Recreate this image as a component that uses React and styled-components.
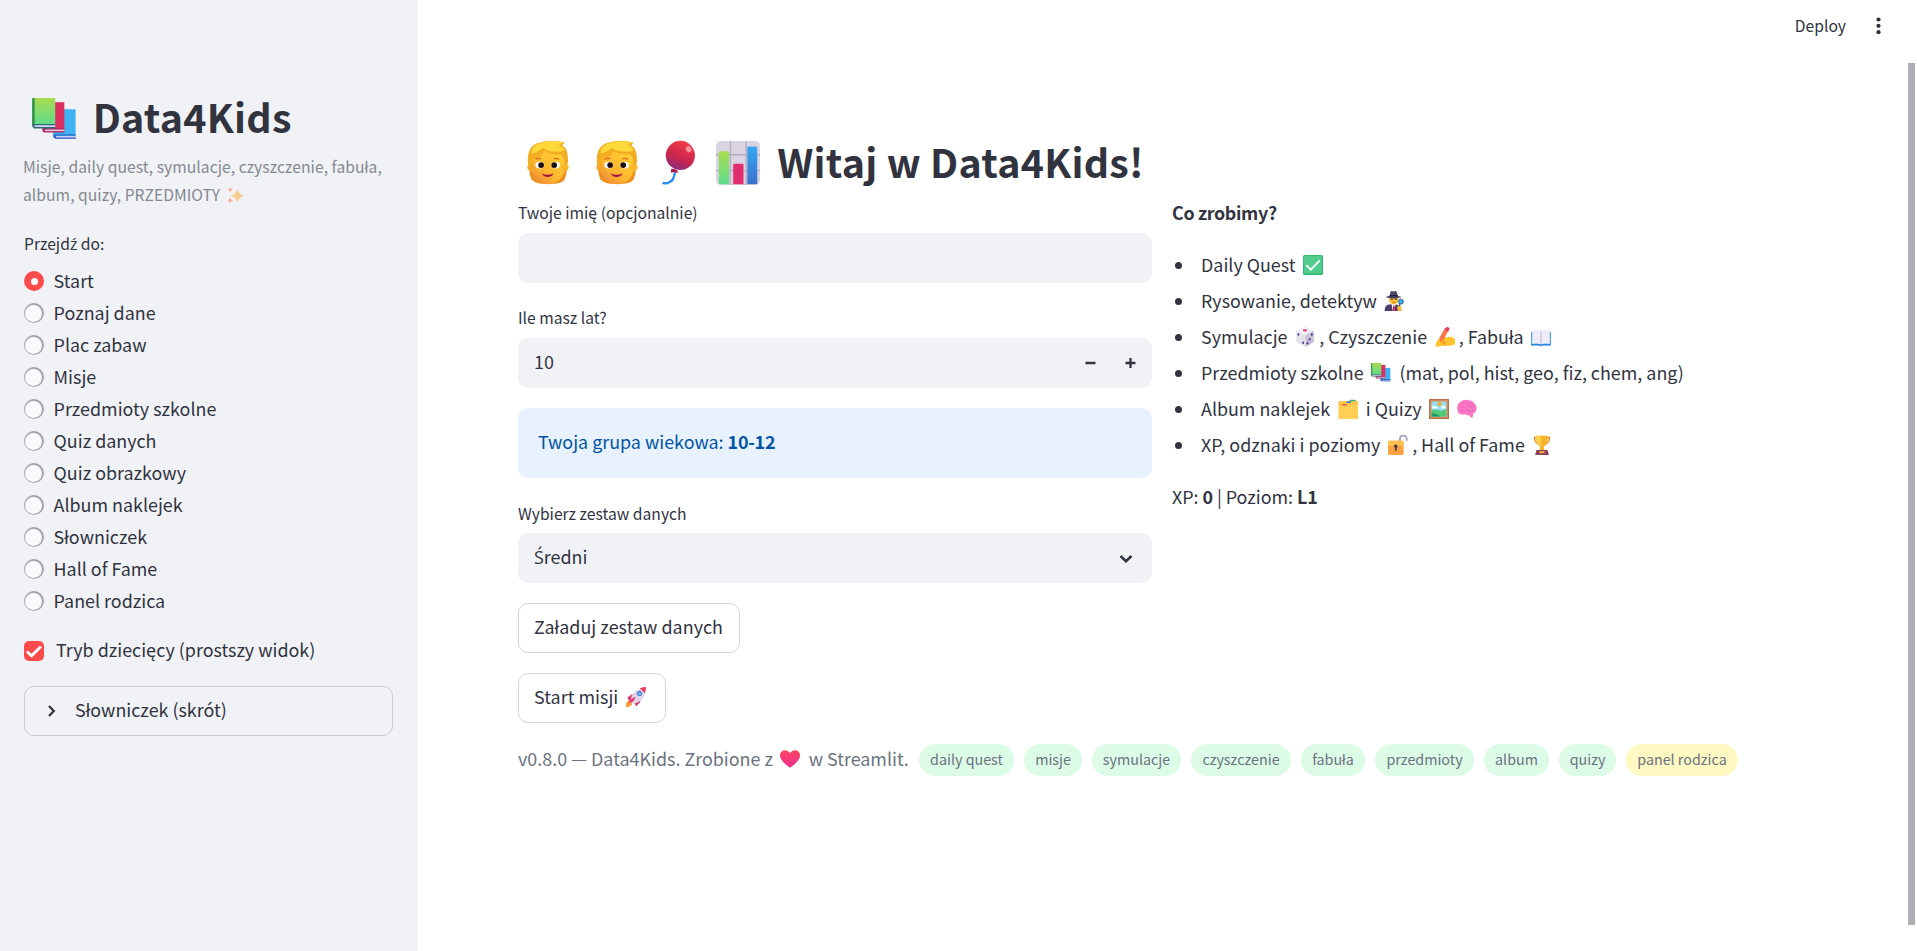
import React from "react";
import styled, { createGlobalStyle, css } from "styled-components";

const GlobalStyle = createGlobalStyle`
  * { box-sizing: border-box; }
  body {
    margin: 0;
    background: #ffffff;
    color: #31333f;
    font-family: "Noto Sans CJK SC", "Noto Sans", sans-serif;
    font-size: 17.9px;
    overflow: hidden;
  }
  b { letter-spacing: -0.25px; }
`;

/* ---------- layout ---------- */
const Page = styled.div`
  display: flex;
  height: 951px;
`;
const Sidebar = styled.aside`
  flex: 0 0 418px;
  padding: 89px 24px 0;
  background: #f0f2f6;
`;
const Content = styled.div`
  flex: 1;
  min-width: 0;
  display: flex;
  flex-direction: column;
`;
const Header = styled.header`
  display: flex;
  justify-content: flex-end;
  align-items: center;
  gap: 30px;
  height: 63px;
  padding: 0 36px 12px 0;
  font-size: 15.66px;
  line-height: 26px;
`;
const Scroller = styled.div`
  flex: 1;
  display: flex;
  justify-content: space-between;
`;
const Main = styled.main`
  width: 1230px;
  margin-left: 100px;
  padding-top: 71px;
`;
const ScrollThumb = styled.div`
  width: 7px;
  height: 862px;
  margin-right: 2px;
  background: #aeaeb4;
`;
const Columns = styled.div`
  display: grid;
  grid-template-columns: 634px 1fr;
  column-gap: 20px;
  margin-top: 13px;
`;
const FormColumn = styled.div`
  display: flex;
  flex-direction: column;
  align-items: flex-start;
`;

/* ---------- text ---------- */
const Title = styled.h1`
  margin: 0;
  height: 53px;
  font-size: 39.4px;
  font-weight: 700;
  letter-spacing: 0.25px;
  line-height: 53px;
  white-space: nowrap;
`;
const Caption = styled.p`
  margin: 11px 0 22px -1px;
  font-size: 15.66px;
  letter-spacing: 0.04px;
  line-height: 28px;
  color: #868891;
  white-space: nowrap;
`;
const Label = styled.div`
  height: 26px;
  margin-bottom: ${(p) => p.$gap}px;
  font-size: 15.66px;
  line-height: 26px;
  white-space: nowrap;
`;
const Acute = styled.span`
  font-family: "Open Sans", "Noto Sans", sans-serif;
  line-height: 1;
`;

/* ---------- sidebar widgets ---------- */
const RadioRow = styled.label`
  display: flex;
  align-items: center;
  gap: 9.6px;
  height: 32px;
`;
const RadioDot = styled.span`
  display: flex;
  align-items: center;
  justify-content: center;
  width: 20px;
  height: 20px;
  border-radius: 50%;
  background: ${(p) => (p.$on ? "#ff4b4b" : "#a3a4ac")};
  &::after {
    content: "";
    width: ${(p) => (p.$on ? 7 : 17)}px;
    height: ${(p) => (p.$on ? 7 : 17)}px;
    margin: ${(p) => (p.$on ? "0" : "1px 1px 0 0")};
    border-radius: 50%;
    background: ${(p) => (p.$on ? "#ffffff" : "#f9f9fb")};
  }
`;
const OptionText = styled.span`
  padding-bottom: ${(p) => p.$lift || 3}px;
  line-height: 28px;
  white-space: nowrap;
`;
const CheckRow = styled.label`
  display: flex;
  align-items: center;
  gap: 12px;
  height: 32px;
  margin-top: 18px;
`;
const CheckBox = styled.span`
  display: flex;
  width: 20px;
  height: 20px;
  border-radius: 5px;
  background: #ff4b4b;
`;
const Expander = styled.div`
  display: flex;
  align-items: center;
  gap: 18px;
  width: 369px;
  height: 50px;
  margin-top: 19px;
  padding-left: 22px;
  border: 1px solid #c9cbd1;
  border-radius: 10px;
`;

/* ---------- form widgets ---------- */
const Field = styled.div`
  display: flex;
  align-items: center;
  justify-content: space-between;
  width: 634px;
  height: 50px;
  margin-bottom: ${(p) => p.$gap}px;
  padding: 0 16px 4px;
  border-radius: 10px;
  background: #f0f2f6;
`;
const FieldIcons = styled.div`
  display: flex;
  gap: 29px;
  padding-top: 3px;
`;
const Info = styled.div`
  display: flex;
  align-items: center;
  width: 634px;
  height: 70px;
  margin-bottom: 23px;
  padding: 0 20px 5px;
  border-radius: 10px;
  background: #e8f2ff;
  color: #0054a3;
  white-space: pre;
`;
const Button = styled.button`
  height: 50px;
  width: ${(p) => p.$width}px;
  margin: 0 0 20px;
  padding: 0 0 4px 15px;
  border: 1px solid #d6d6d9;
  border-radius: 10px;
  background: #ffffff;
  color: inherit;
  font: inherit;
  letter-spacing: 0.03px;
  line-height: 30px;
  text-align: left;
  white-space: nowrap;
`;

/* ---------- right column ---------- */
const Paragraph = styled.p`
  margin: ${(p) => p.$top || 0}px 0 0;
  height: 30px;
  line-height: 30px;
  white-space: nowrap;
`;
const Heading = styled.p`
  margin: 0;
  height: 24px;
  line-height: 24px;
  font-weight: 700;
  letter-spacing: -0.35px;
`;
const List = styled.ul`
  margin: 23px 0 0;
  padding: 0;
  list-style: none;
`;
const Item = styled.li`
  display: flex;
  align-items: center;
  height: 36px;
  padding-bottom: 2px;
  line-height: 34px;
  white-space: nowrap;
  &::before {
    content: "";
    flex: 0 0 7px;
    height: 7px;
    margin: 3px 19px 0 3px;
    border-radius: 50%;
    background: #31333f;
  }
`;

/* ---------- footer ---------- */
const Footer = styled.footer`
  display: flex;
  align-items: center;
  height: 32px;
  margin-top: 1px;
  color: #6b7280;
  white-space: nowrap;
`;
const FooterText = styled.span`
  width: 401px;
  padding-bottom: 5px;
  line-height: 28px;
`;
const Badge = styled.span`
  width: ${(p) => p.$width}px;
  height: 32px;
  margin-right: 10px;
  border-radius: 16px;
  background: ${(p) => (p.$warm ? "#fef9c3" : "#dcfce7")};
  font-size: 14.3px;
  line-height: 30px;
  text-align: center;
`;

/* ---------- emoji ---------- */
const EmojiSvg = styled.svg`
  display: inline-block;
  width: ${(p) => p.$size}px;
  height: ${(p) => p.$size}px;
  margin: 0 ${(p) => p.$right}px 0 ${(p) => p.$left}px;
  vertical-align: ${(p) => p.$drop}px;
  overflow: visible;
  ${(p) =>
    p.$faded &&
    css`
      opacity: 0.6;
    `}
`;

const drawings = {
  books: (
    <>
      <path d="M15 8h16v21H17l-2-2z" fill="#3fb2f3" />
      <path d="M16 27h15v2H16z" fill="#d4cdf2" />
      <path d="M15 27q0-1.300 2-1.300h14v.9H17.500q-1 .8 0 1.500H31v.9H17q-2-.5-2-2z" fill="#2c63c5" />
      <path d="M7.500 3H23v21H7.500z" fill="#dd2f60" />
      <path d="M8 22h15v2H8z" fill="#e3c6e6" />
      <path d="M7.500 21.500h15.500v.9H9.500q-1 .7 0 1.300H23v.9H9q-1.500-.5-1.500-3z" fill="#b01c55" />
      <path d="M0 1q0-1 1-1h15.500v19H0z" fill="url(#barGreen)" />
      <path d="M0 1q0-1 1-1h1v19H0z" fill="#3b9a50" />
      <path d="M1 19h15.500v2H1z" fill="#dcd0f0" />
      <path d="M0 18.500h16.500v.9H2q-1 .7 0 1.300h14.500v.9H1.500Q0 21 0 18.500z" fill="#2c6b77" />
    </>
  ),
  face: (
    <>
      <path d="M4 14Q1 22 4 28q3 3 7 3h10q5 0 7-3 3-6 0-14z" fill="#ee8f1c" />
      <ellipse cx="16" cy="18.500" rx="12.500" ry="13" fill="url(#skinFill)" />
      <circle cx="3.500" cy="19" r="2.500" fill="#f5a62c" />
      <circle cx="28.500" cy="19" r="2.500" fill="#ffb52c" />
      <path d="M1.500 17Q0 3 10 1q8-2 18 0-1 2-2 2 5 2 4.500 13l-2 2q-1-6-3-8-9 0-12-3-2 5-8 6l-1 5z" fill="#f3ad22" />
      <path d="M9 2q9-3 18-1-2 2-5 2 5 0 6 4-10 2-16-2Q9 8 4 9q0-5 5-7z" fill="#ffd83a" />
      <ellipse cx="10" cy="17.500" rx="3.200" ry="2.500" fill="#fff" />
      <ellipse cx="21.500" cy="17.500" rx="3.200" ry="2.500" fill="#fff" />
      <circle cx="11" cy="17.500" r="2.100" fill="#1f0d10" />
      <circle cx="20.500" cy="17.500" r="2.100" fill="#1f0d10" />
      <path d="M7 13.500q2-1.500 4-.5M20 13q2-1 4 .5" stroke="#e0682a" strokeWidth="1" fill="none" />
      <path d="M11.500 23.700q4 1.700 8.500 0-1 2.500-4.200 2.500t-4.300-2.500z" fill="#a3154b" />
    </>
  ),
  balloon: (
    <>
      <path d="M13 21q0 8-5 9.500-3 .5-4 0" stroke="#2f8ef4" strokeWidth="1.800" fill="none" />
      <circle cx="17" cy="10.500" r="10.600" fill="url(#balloonFill)" />
      <path d="M10.500 20l4 1 1 2-3.500-.5-2 .5z" fill="#b01347" />
      <ellipse cx="23" cy="6" rx="2" ry="2.300" fill="#ff8f98" transform="rotate(-35 23 6)" />
    </>
  ),
  chart: (
    <>
      <rect width="32" height="32" rx="3.500" fill="#d9d3e2" />
      <path d="M10.500 0v32M22 0v32M0 10h32M0 21.500h32" stroke="#b5adc2" strokeWidth="1" />
      <path d="M2 8.500q0-1 1-1h5.500q1 0 1 1V31.500H2z" fill="url(#barGreen)" />
      <path d="M12.500 17.500q0-1 1-1H19q1 0 1 1v14h-7.500z" fill="#e22c6d" />
      <path d="M22.800 5q0-1 1-1h5.200q1 0 1 1v26.500h-7.200z" fill="url(#barBlue)" />
    </>
  ),
  sparkles: (
    <>
      <path d="M19 3q1.500 10 13 13-11.500 3-13 13-2-10-12-13 10-3 12-13z" fill="#fbb74b" />
      <path d="M6 0q.8 4 5 5-4.200 1-5 5Q5 6 1 5q4.200-1 5-5z" fill="#fb8d5c" />
      <path d="M6 19q.8 4.500 5 5.500-4.200 1-5 5.500-1-4.500-6-5.500 5-1 6-5.500z" fill="#fb8070" />
    </>
  ),
  check: (
    <>
      <rect width="32" height="32" rx="3" fill="#2fae6d" />
      <rect x="1" y="1" width="29.500" height="29" rx="2.500" fill="#50cd8c" />
      <path d="M6 17l6.500 6.500L26 9.500" stroke="#fff" strokeWidth="3" fill="none" strokeLinecap="round" />
    </>
  ),
  detective: (
    <>
      <path d="M1 32q0-8 5-10l6-1h6q9 1 10 11z" fill="#49416b" />
      <path d="M12 20h7l-3 12h-2z" fill="#fff" />
      <path d="M14.500 23h2.500l1 9h-4z" fill="#d32f63" />
      <circle cx="15.500" cy="14" r="7.500" fill="#ffc22f" />
      <path d="M9 8q1-8 3-8 3 1.500 6 0 3 0 4 8 5 .5 6 2-12 4-25 0 1-2 6-2z" fill="#4d4769" />
      <path d="M9 6.500h13v2H9z" fill="#27223f" />
      <path d="M11 13h3m3.500 0h3" stroke="#4b2a29" strokeWidth="1.800" />
      <path d="M13 18q2.500 1.500 5 0" stroke="#a63b2c" fill="none" />
      <circle cx="27" cy="17" r="4" fill="#36b2ef" stroke="#3a517f" strokeWidth="1.300" />
      <path d="M25 21v8" stroke="#484066" strokeWidth="2" />
      <path d="M21 25q3-2 6 0l1 7h-6z" fill="#ffb72c" />
    </>
  ),
  die: (
    <>
      <path d="M16 0l14 6v18l-13 8L2 24V6z" fill="#e4e0ec" />
      <path d="M16 0l14 6-13 7L2 6z" fill="#f2eff7" />
      <path d="M17 13l13-7v18l-13 8z" fill="#c8c0d5" />
      <ellipse cx="16" cy="5.500" rx="3.500" ry="1.800" fill="#e7436a" />
      <g fill="#4b3984">
        <ellipse cx="5.500" cy="12" rx="1.500" ry="2" />
        <ellipse cx="13" cy="25" rx="1.500" ry="2" />
        <ellipse cx="20" cy="26" rx="1.500" ry="2" />
        <ellipse cx="23.500" cy="19.500" rx="1.500" ry="2" />
        <ellipse cx="27" cy="12" rx="1.500" ry="2" />
      </g>
    </>
  ),
  writing: (
    <>
      <path d="M1 31q-1-5 3-10 4-6 9-7l5 3q8-3 12 1l2 2v8l-9 2H12l-5 1z" fill="#ffc42e" />
      <path d="M11 22l6 3h-6l6 4" stroke="#ed961f" strokeWidth="1.500" fill="none" />
      <path d="M7 17L16 2l6 3-9 16-5 3z" fill="#fb7445" />
      <path d="M17 1q2-2 4-.5 3 1 2 3.500l-2 3-6-3z" fill="#e8405d" />
    </>
  ),
  openBook: (
    <>
      <path d="M0 8h32v22H19l-3 1-3-1H0z" fill="#4aa9f0" />
      <path d="M2 5q7-2 14 1 7-3 14-1v22q-7-2-14 1-7-3-14-1z" fill="#efebf8" />
      <path d="M16 6v22" stroke="#c5bddb" strokeWidth="1.800" />
      <path d="M1 28h14q1 1 2 0h14" stroke="#347dd2" strokeWidth="1.400" fill="none" />
    </>
  ),
  folders: (
    <>
      <path d="M18 4q0-3 2-3h7q2 0 2 3z" fill="#35b77e" />
      <path d="M1 5q0-2 2-2h27q2 0 2 2v25q0 2-2 2H3q-2 0-2-2z" fill="#ffc548" />
      <path d="M13 5.500l2-2h6v3h-8z" fill="#3c83cf" />
      <path d="M7 8h7v2.500H7z" fill="#ef5b4c" />
      <path d="M1 12h14l3-2h14v20q0 2-2 2H3q-2 0-2-2z" fill="#ffcf56" />
    </>
  ),
  picture: (
    <>
      <rect width="32" height="32" rx="1" fill="#b96f49" />
      <path d="M2 2h28v28H2z" fill="#d9935f" />
      <path d="M4 4h24v24H4z" fill="#92dcf5" />
      <circle cx="17" cy="8" r="3.300" fill="#fba91f" />
      <path d="M5 12q3-3 6 0h3v3H5zM20 11q3-2 7 1v3h-8z" fill="#effbff" />
      <path d="M4 18q8-3 15 1l9-3v12H4z" fill="#55c77a" />
      <path d="M4 23q8-1 14 5H4z" fill="#219b65" />
    </>
  ),
  brain: (
    <>
      <path d="M1 19Q-2 9 6 4q5-4 13-2 6 0 9 5 5 5 3 11-1 4-5 5l-1 6q-3 3-5-3-4 1-7-2-3 2-8 0-4-1-4-5z" fill="#fb77c5" />
      <path d="M8 7q3-3 6 0m2-3q1 5 6 4m-17 6q4-4 7 0m3-2q4-3 7 1 3-3 5 0M5 19q4-3 8 1m2-3q5-1 5 4 3-4 7-3" stroke="#e355b0" strokeWidth="1.200" fill="none" />
    </>
  ),
  lock: (
    <>
      <path d="M19 11V7q0-6 5.500-6T30 7v2" stroke="#aca3bc" strokeWidth="3" fill="none" />
      <rect y="9" width="25" height="23" rx="3" fill="#fba343" />
      <path d="M3 9h19q3 0 3 3v5H0v-5q0-3 3-3z" fill="#ffc04f" />
      <circle cx="12.500" cy="18" r="2.700" fill="#44314c" />
      <path d="M11.200 18h2.600v7h-2.600z" fill="#44314c" />
    </>
  ),
  trophy: (
    <>
      <path d="M8 4H4q0 9 7 10m13-10h4q0 9-7 10" stroke="#e5901f" strokeWidth="2.200" fill="none" />
      <path d="M7 1h18v7q0 8-6 10l1 7h-8l1-7q-6-2-6-10z" fill="#f9b42b" />
      <path d="M7 1h7v16Q7 14 7 8z" fill="#ffd34e" />
      <path d="M7 24h18l2 8H5z" fill="#8f4256" />
      <path d="M12 26h8v3h-8z" fill="#f3b641" />
    </>
  ),
  rocket: (
    <>
      <path d="M0 32q-1-8 4-10l6 5q-2 5-10 5z" fill="#fc9c35" />
      <path d="M2 17l8-6 5 6-9 6zM14 25l8-7 1 6-7 7z" fill="#e33569" />
      <path d="M7 22Q9 7 24 2l7 6q-3 16-19 19z" fill="#ddd4e8" />
      <path d="M22 2Q27 0 32 0q0 6-2 10z" fill="#ed3e63" />
      <circle cx="21.500" cy="10.500" r="4" fill="#3f72c4" />
      <circle cx="21.500" cy="10.500" r="2.700" fill="#6cb8f4" />
      <path d="M5 24q3-6 10-8-2 8-9 10z" fill="#ef3266" />
    </>
  ),
  heart: (
    <>
      <path d="M16 30Q0 19 0 10.500 0 3 7 2q6-.5 9 4.500Q19 1.500 25 2q7 1 7 8.500Q32 19 16 30z" fill="url(#heartFill)" />
    </>
  ),
};

function Emoji({ name, size = 20, left = 3.5, right = 4.2, drop = -3, faded }) {
  return (
    <EmojiSvg viewBox="0 0 32 32" $size={size} $left={left} $right={right} $drop={drop} $faded={faded}>
      {drawings[name]}
    </EmojiSvg>
  );
}

const GradientHost = styled.svg`
  position: absolute;
`;
function Gradients() {
  return (
    <GradientHost width="0" height="0">
      <defs>
        <linearGradient id="balloonFill" x1="0.7" y1="0" x2="0.3" y2="1">
          <stop offset="0" stopColor="#f43d4b" />
          <stop offset="0.6" stopColor="#c9244d" />
          <stop offset="1" stopColor="#86307f" />
        </linearGradient>
        <linearGradient id="skinFill" x1="0.8" y1="0.2" x2="0.2" y2="1">
          <stop offset="0" stopColor="#ffcb30" />
          <stop offset="0.6" stopColor="#fcb62f" />
          <stop offset="1" stopColor="#f0853a" />
        </linearGradient>
        <linearGradient id="barGreen" x1="0" y1="0" x2="0" y2="1">
          <stop offset="0" stopColor="#a9dc4f" />
          <stop offset="1" stopColor="#5fdc8d" />
        </linearGradient>
        <linearGradient id="barBlue" x1="0" y1="0" x2="0" y2="1">
          <stop offset="0" stopColor="#35a8f3" />
          <stop offset="1" stopColor="#3a70cd" />
        </linearGradient>
        <linearGradient id="heartFill" x1="0" y1="0" x2="0" y2="1">
          <stop offset="0" stopColor="#fa4760" />
          <stop offset="1" stopColor="#f22d93" />
        </linearGradient>
      </defs>
    </GradientHost>
  );
}

const pages = [
  "Start",
  "Poznaj dane",
  "Plac zabaw",
  "Misje",
  "Przedmioty szkolne",
  "Quiz danych",
  "Quiz obrazkowy",
  "Album naklejek",
  "Słowniczek",
  "Hall of Fame",
  "Panel rodzica",
];

const badges = [
  ["daily quest", 95],
  ["misje", 58],
  ["symulacje", 89],
  ["czyszczenie", 100],
  ["fabuła", 64],
  ["przedmioty", 99],
  ["album", 65],
  ["quizy", 57],
  ["panel rodzica", 112],
];

export default function App() {
  return (
    <>
      <GlobalStyle />
      <Gradients />
      <Page>
        <Sidebar>
          <Title>
            <Emoji name="books" size={45} left={8} right={6.5} drop={-10} /> Data4Kids
          </Title>
          <Caption>
            Misje, daily quest, symulacje, czyszczenie, fabuła,
            <br />
            album, quizy, PRZEDMIOTY <Emoji name="sparkles" size={17.5} left={3} faded />
          </Caption>
          <Label $gap={8}>
            Przejd<Acute>ź</Acute> do:
          </Label>
          {pages.map((page, i) => (
            <RadioRow key={page}>
              <RadioDot $on={i === 0} />
              <OptionText>{page}</OptionText>
            </RadioRow>
          ))}
          <CheckRow>
            <CheckBox>
              <svg width="20" height="20" viewBox="0 0 20 20">
                <path d="M3 10.500l4.500 4.300L17 5.500" stroke="#fff" strokeWidth="2.800" fill="none" />
              </svg>
            </CheckBox>
            <OptionText $lift={5}>Tryb dziecięcy (prostszy widok)</OptionText>
          </CheckRow>
          <Expander>
            <svg width="10" height="14" viewBox="0 0 10 14">
              <path d="M2 2l4.800 5L2 12" stroke="#31333f" strokeWidth="2.200" fill="none" />
            </svg>
            <OptionText $lift={4}>Słowniczek (skrót)</OptionText>
          </Expander>
        </Sidebar>

        <Content>
          <Header>
            <span>Deploy</span>
            <svg width="5" height="18" viewBox="0 0 5 18" fill="#31333f">
              <circle cx="2.500" cy="2.500" r="2.100" />
              <circle cx="2.500" cy="8.800" r="2.100" />
              <circle cx="2.500" cy="15.200" r="2.100" />
            </svg>
          </Header>
          <Scroller>
            <Main>
              <Title>
                <Emoji name="face" size={44} left={8} right={16} drop={-7} />
                <Emoji name="face" size={44} left={9} right={14} drop={-7} />
                <Emoji name="balloon" size={44} left={4} right={13} drop={-7} />
                <Emoji name="chart" size={44} left={2} right={8} drop={-7} /> Witaj w Data4Kids!
              </Title>
              <Columns>
                <FormColumn>
                  <Label $gap={7}>Twoje imię (opcjonalnie)</Label>
                  <Field $gap={22} />
                  <Label $gap={7}>Ile masz lat?</Label>
                  <Field $gap={20}>
                    10
                    <FieldIcons>
                      <svg width="11" height="12" viewBox="0 0 11 12">
                        <path d="M0.500 6h10" stroke="#31333f" strokeWidth="2.500" />
                      </svg>
                      <svg width="11" height="12" viewBox="0 0 11 12">
                        <path d="M0.500 6h10M5.500 1v10" stroke="#31333f" strokeWidth="2.300" />
                      </svg>
                    </FieldIcons>
                  </Field>
                  <Info>
                    Twoja grupa wiekowa: <b>10-12</b>
                  </Info>
                  <Label $gap={6}>Wybierz zestaw danych</Label>
                  <Field $gap={20}>
                    <span>
                      <Acute>Ś</Acute>redni
                    </span>
                    <FieldIcons>
                      <svg width="20" height="12" viewBox="0 0 20 12">
                        <path d="M4.500 4l5.500 5.200L15.500 4" stroke="#31333f" strokeWidth="2.500" fill="none" />
                      </svg>
                    </FieldIcons>
                  </Field>
                  <Button $width={222}>Załaduj zestaw danych</Button>
                  <Button $width={148}>
                    Start misji <Emoji name="rocket" drop={-3} />
                  </Button>
                </FormColumn>
                <div>
                  <Heading>Co zrobimy?</Heading>
                  <List>
                    <Item>
                      <span>
                        Daily Quest <Emoji name="check" />
                      </span>
                    </Item>
                    <Item>
                      <span>
                        Rysowanie, detektyw <Emoji name="detective" />
                      </span>
                    </Item>
                    <Item>
                      <span>
                        Symulacje <Emoji name="die" />, Czyszczenie <Emoji name="writing" />, Fabuła{" "}
                        <Emoji name="openBook" />
                      </span>
                    </Item>
                    <Item>
                      <span>
                        Przedmioty szkolne <Emoji name="books" /> (mat, pol, hist, geo, fiz, chem, ang)
                      </span>
                    </Item>
                    <Item>
                      <span>
                        Album naklejek <Emoji name="folders" /> i Quizy <Emoji name="picture" />
                        <Emoji name="brain" />
                      </span>
                    </Item>
                    <Item>
                      <span>
                        XP, odznaki i poziomy <Emoji name="lock" />, Hall of Fame <Emoji name="trophy" />
                      </span>
                    </Item>
                  </List>
                  <Paragraph $top={18}>
                    XP: <b>0</b> | Poziom: <b>L1</b>
                  </Paragraph>
                </div>
              </Columns>
              <Footer>
                <FooterText>
                  v0.8.0 — Data4Kids. Zrobione z <Emoji name="heart" /> w Streamlit.
                </FooterText>
                {badges.map(([text, width]) => (
                  <Badge key={text} $width={width} $warm={text === "panel rodzica"}>
                    {text}
                  </Badge>
                ))}
              </Footer>
            </Main>
            <ScrollThumb />
          </Scroller>
        </Content>
      </Page>
    </>
  );
}
